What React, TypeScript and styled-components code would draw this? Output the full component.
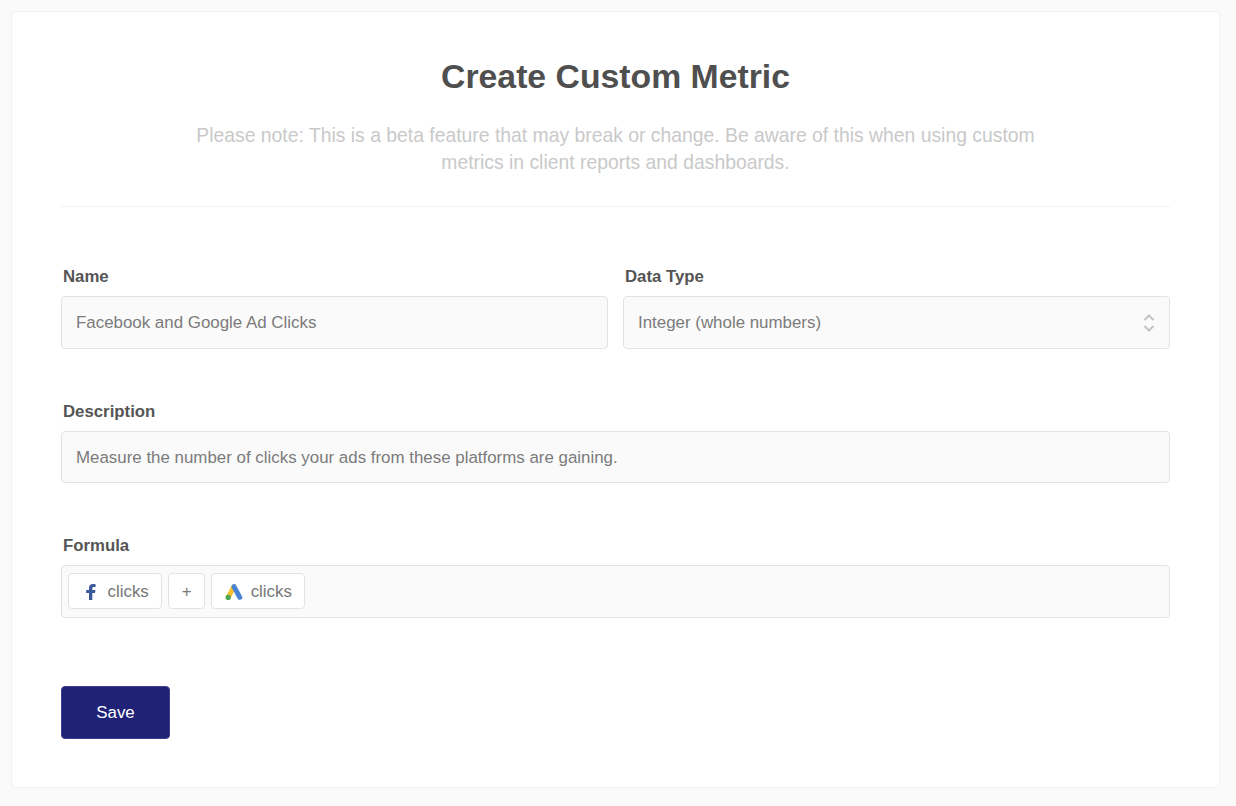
import styled, { createGlobalStyle } from 'styled-components';

const GlobalStyle = createGlobalStyle`
  html, body {
    margin: 0;
    padding: 0;
    background: #fafafa;
    font-family: 'Liberation Sans', Arial, sans-serif;
  }
`;

const FacebookIcon = () => (
  <svg width="18" height="18" viewBox="0 0 18 18" aria-hidden="true">
    <path
      fill="#3b5998"
      d="M7 17v-7H4.2V7H7V5c0-2.7 1.6-4 4-4 1.1 0 2.2.1 2.6.2V4H12c-1.3 0-1.7.7-1.7 1.6V7h3.2l-.5 3h-2.7v7z"
    />
  </svg>
);

const GoogleAdsIcon = () => (
  <svg width="18" height="18" viewBox="0 0 18 18" aria-hidden="true">
    <path stroke="#f6c02f" strokeWidth="5" strokeLinecap="round" d="M9 3.6 3.2 14.4" />
    <path stroke="#4a84d4" strokeWidth="5" strokeLinecap="round" d="M9 3.6l5.8 10.8" />
    <circle cx="3.2" cy="14.4" r="2.6" fill="#4aa85a" />
  </svg>
);

const App = () => {
  return (
    <Page>
      <GlobalStyle />
      <Card>
        <Header>
          <Title>Create Custom Metric</Title>
          <Note>
            Please note: This is a beta feature that may break or change. Be aware of this when using custom
            metrics in client reports and dashboards.
          </Note>
        </Header>

        <Row>
          <Field>
            <Label>Name</Label>
            <InputBox>Facebook and Google Ad Clicks</InputBox>
          </Field>
          <Field>
            <Label>Data Type</Label>
            <SelectBox>
              Integer (whole numbers)
              <svg width="14" height="22" viewBox="0 0 14 22" fill="none" stroke="#c4c4c4" strokeWidth="2" aria-hidden="true">
                <path d="M2.5 8 7 3.5 11.5 8" />
                <path d="M2.5 14 7 18.5 11.5 14" />
              </svg>
            </SelectBox>
          </Field>
        </Row>

        <Field>
          <Label>Description</Label>
          <InputBox>Measure the number of clicks your ads from these platforms are gaining.</InputBox>
        </Field>

        <Field>
          <Label>Formula</Label>
          <FormulaBox>
            <Chip>
              <FacebookIcon />
              clicks
            </Chip>
            <Chip>+</Chip>
            <Chip>
              <GoogleAdsIcon />
              clicks
            </Chip>
          </FormulaBox>
        </Field>

        <SaveButton>Save</SaveButton>
      </Card>
    </Page>
  );
};

const Page = styled.div`
  box-sizing: border-box;
  height: 806px;
  padding: 11px 16px 18px 11px;
  background: #fafafa;
`;

const Card = styled.div`
  box-sizing: border-box;
  height: 777px;
  padding: 0 49px;
  background: #fff;
  border: 1px solid #f1f1f1;
  border-radius: 5px;
`;

const Header = styled.div`
  height: 194px;
  margin-bottom: 61px;
  border-bottom: 1px solid #f3f3f3;
  text-align: center;
`;

const Title = styled.h1`
  margin: 0;
  padding-top: 46px;
  font-size: 33.75px;
  line-height: 37px;
  font-weight: 700;
  color: #4f4f4f;
`;

const Note = styled.p`
  width: 850px;
  margin: 27px auto 0;
  font-size: 19.35px;
  line-height: 27px;
  color: #c9c9c9;
`;

const Row = styled.div`
  display: grid;
  grid-template-columns: 547px 547px;
  column-gap: 15px;
`;

const Field = styled.div`
  margin-bottom: 54px;
`;

const Label = styled.div`
  height: 17px;
  margin: 0 0 11px 2px;
  font-size: 16.8px;
  line-height: 17px;
  font-weight: 700;
  color: #555;
`;

const InputBox = styled.div`
  box-sizing: border-box;
  display: flex;
  align-items: center;
  height: 52.5px;
  padding: 2px 14px 0;
  background: #fafafa;
  border: 1px solid #e3e3e3;
  border-radius: 4px;
  font-size: 16.9px;
  color: #7b7b7b;
`;

const SelectBox = styled(InputBox)`
  justify-content: space-between;
  padding-right: 13px;
`;

const FormulaBox = styled(InputBox)`
  gap: 6px;
  padding: 0 6px;
`;

const Chip = styled.div`
  box-sizing: border-box;
  display: flex;
  align-items: center;
  gap: 8px;
  height: 36px;
  padding: 1px 12.5px 0;
  background: #fff;
  border: 1px solid #e3e3e3;
  border-radius: 4px;
  font-size: 16.9px;
  color: #777;
`;

const SaveButton = styled.button`
  display: block;
  width: 109px;
  height: 53px;
  margin-top: 68.5px;
  padding: 0;
  background: #1f2276;
  border: 1px solid #3b3e8c;
  border-radius: 4px;
  font-family: inherit;
  font-size: 16.9px;
  color: #fff;
`;

export default App;
